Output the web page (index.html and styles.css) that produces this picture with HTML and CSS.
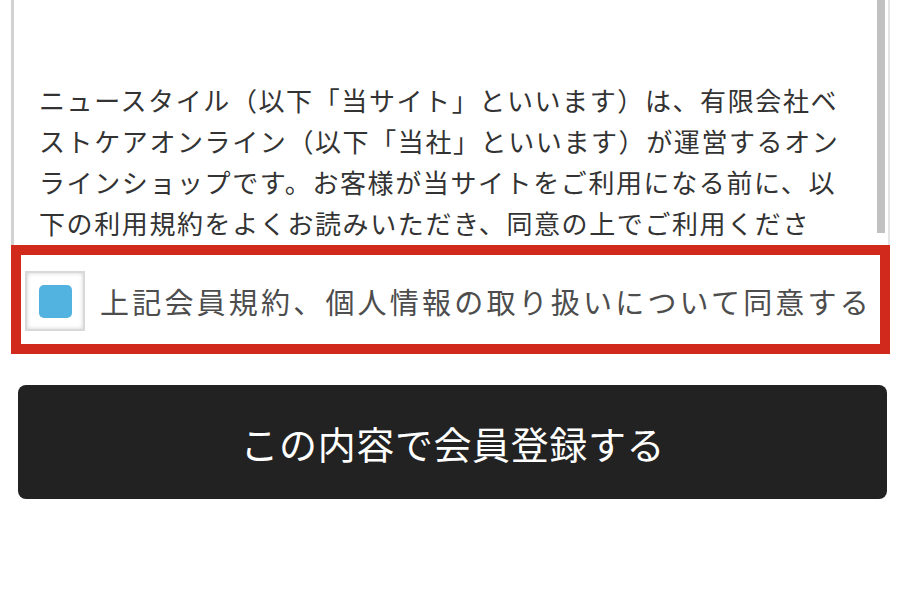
FILE: index.html
```html
<!DOCTYPE html>
<html lang="ja">
<head>
<meta charset="utf-8">
<title>会員登録</title>
<link rel="stylesheet" href="styles.css">
</head>
<body>
<div class="page">
  <div class="terms">
    <div class="terms-text">
      <p>ニュースタイル（以下「当サイト」といいます）は、有限会社ベストケアオンライン（以下「当社」といいます）が運営するオンラインショップです。お客様が当サイトをご利用になる前に、以下の利用規約をよくお読みいただき、同意の上でご利用ください。</p>
    </div>
    <div class="scroll-track"><div class="scroll-thumb"></div></div>
  </div>
  <label class="agree">
    <span class="check"><span class="check-mark"></span></span>
    <span class="agree-text">上記会員規約、個人情報の取り扱いについて同意する</span>
  </label>
  <button class="submit" type="button">この内容で会員登録する</button>
</div>
</body>
</html>
```

FILE: styles.css
```css
html, body {
  margin: 0;
  padding: 0;
  background: #ffffff;
}

body {
  font-family: "Noto Sans CJK JP", "Noto Sans", sans-serif;
}

.page {
  padding: 0 10px 0 11px;
  display: flex;
  flex-direction: column;
}

.terms {
  display: flex;
  height: 245px;
  border-left: 3px solid #d2d2d2;
  border-right: 2px solid #e4e4e4;
  box-sizing: border-box;
}

.terms-text {
  flex: 1;
  overflow: hidden;
  padding: 79px 23px 0 25px;
}

.terms-text p {
  margin: 0;
  font-size: 26px;
  line-height: 41px;
  letter-spacing: 1.6px;
  color: #333333;
}

.scroll-track {
  width: 8px;
  margin-right: 3px;
}

.scroll-thumb {
  height: 233px;
  background: #c1c1c1;
}

.agree {
  display: flex;
  align-items: center;
  border: 10px solid #d12a1c;
  padding: 16px 0 13px 4px;
  cursor: pointer;
}

.check {
  width: 60px;
  height: 60px;
  box-sizing: border-box;
  border: 2px solid #d9d9d9;
  box-shadow: inset 0 0 4px rgba(0, 0, 0, 0.18);
  display: flex;
  align-items: center;
  justify-content: center;
  flex-shrink: 0;
}

.check-mark {
  width: 33px;
  height: 33px;
  border-radius: 5px;
  background: #52b3e0;
}

.agree-text {
  margin-left: 15px;
  font-size: 29px;
  letter-spacing: 3.2px;
  color: #4d4d4d;
  white-space: nowrap;
  line-height: 40px;
}

.submit {
  margin: 31px 3px 0 7px;
  height: 114px;
  border: none;
  border-radius: 8px;
  background: #222222;
  color: #ffffff;
  font-family: "Noto Sans CJK JP", "Noto Sans", sans-serif;
  font-size: 38px;
  letter-spacing: 0.6px;
  padding: 0 0 0 0.6px;
  cursor: pointer;
}
```
